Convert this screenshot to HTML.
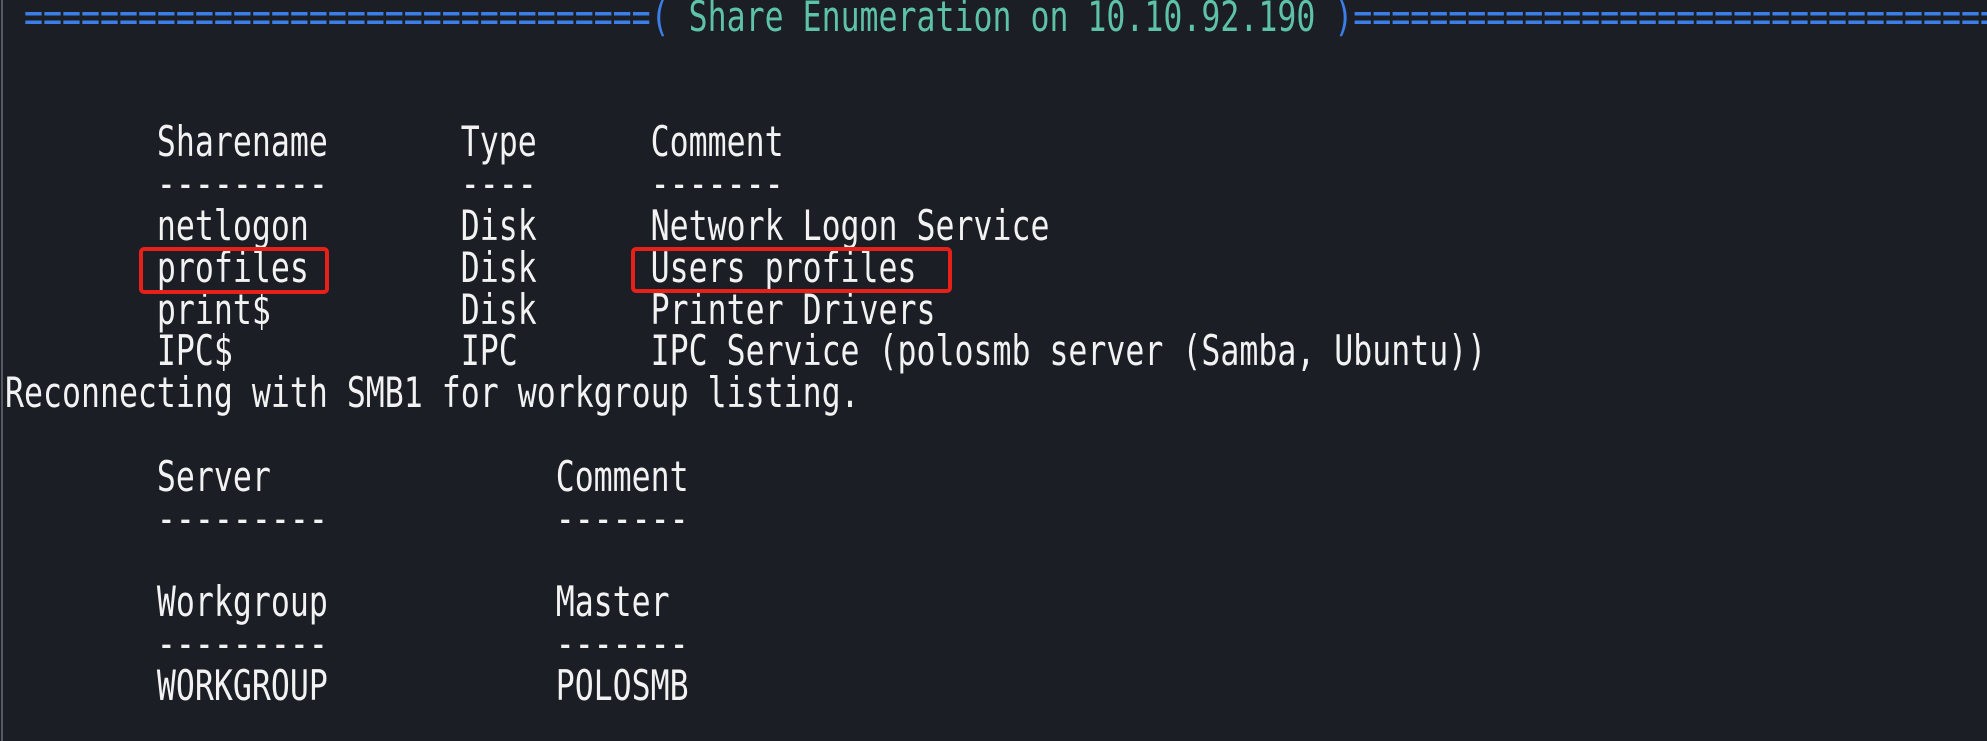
<!DOCTYPE html>
<html><head><style>
html,body{margin:0;padding:0;background:#1b1e25;width:1987px;height:741px;overflow:hidden;position:relative}
.bar{position:absolute;left:1px;top:0;width:2px;height:741px;background:#555a62}
pre{position:absolute;left:5px;top:-4px;margin:0;width:2640px;overflow:hidden;font-family:"DejaVu Sans Mono","Liberation Mono",monospace;font-size:42px;line-height:41.8px;color:#f2f2f2;transform:scaleX(0.751);transform-origin:0 0;white-space:pre}
.b{color:#3b7ee8}.t{color:#5ec2a6}
.box{position:absolute;border:4px solid #e8201a;border-radius:5px;box-sizing:border-box}
</style></head><body>
<div class="bar"></div>
<pre> <span class="b">=================================(</span><span class="t"> Share Enumeration on 10.10.92.190 </span><span class="b">)=================================================</span>


        Sharename       Type      Comment
        ---------       ----      -------
        netlogon        Disk      Network Logon Service
        profiles        Disk      Users profiles
        print$          Disk      Printer Drivers
        IPC$            IPC       IPC Service (polosmb server (Samba, Ubuntu))
Reconnecting with SMB1 for workgroup listing.

        Server               Comment
        ---------            -------

        Workgroup            Master
        ---------            -------
        WORKGROUP            POLOSMB
</pre>
<div class="box" style="left:139px;top:247px;width:190px;height:47px"></div>
<div class="box" style="left:631px;top:247px;width:321px;height:46px"></div>
</body></html>
